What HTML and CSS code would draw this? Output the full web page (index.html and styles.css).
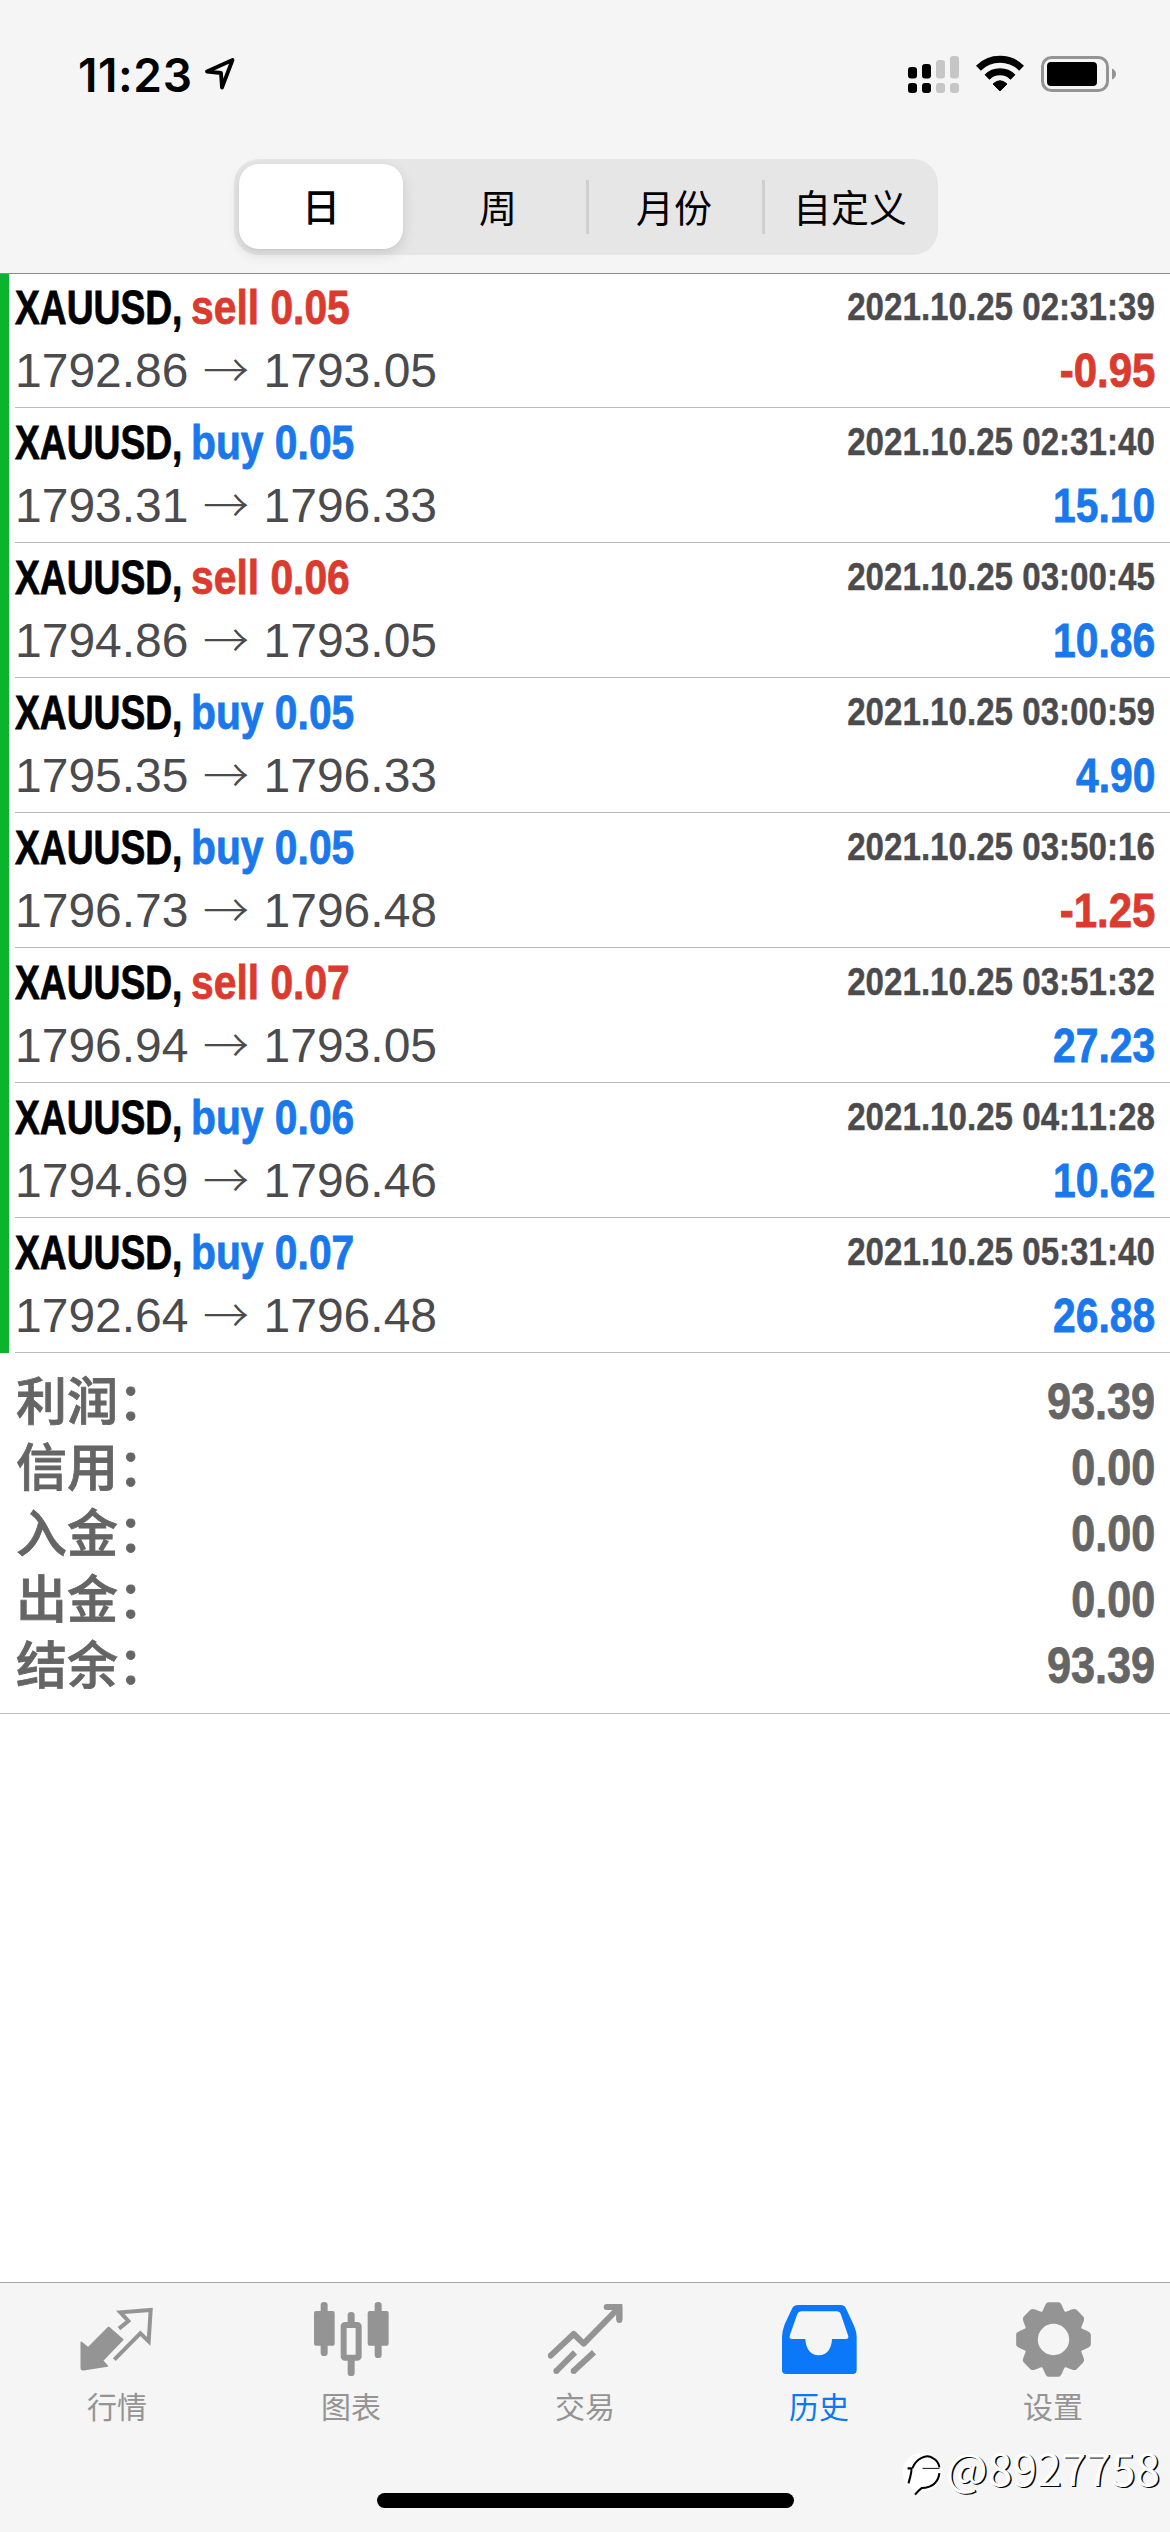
FILE: index.html
```html
<!DOCTYPE html>
<html lang="zh-CN">
<head>
<meta charset="utf-8">
<title>历史</title>
<link rel="stylesheet" href="styles.css">
</head>
<body>
<div class="screen">
  <header class="header">
    <div class="status">
      <div class="status-left">
        <span class="clock">11:23</span>
        <svg class="location" viewBox="0 0 32 34"><path d="M3 14.5 L28.5 3 L18 30.5 L17 16 Z" fill="none" stroke="#000" stroke-width="3.8" stroke-linejoin="round"/></svg>
      </div>
      <div class="status-right">
        <svg class="signal" viewBox="0 0 51 38">
          <g fill="#000"><rect x="0" y="11" width="9" height="11.5" rx="3"/><rect x="14" y="8" width="9" height="14.5" rx="3"/><rect x="0" y="27" width="9" height="10" rx="3"/><rect x="14" y="27" width="9" height="10" rx="3"/></g>
          <g fill="#c6c6c6"><rect x="28" y="4" width="9" height="18.5" rx="3"/><rect x="42" y="0" width="9" height="22.5" rx="3"/><rect x="28" y="27" width="9" height="10" rx="3"/><rect x="42" y="27" width="9" height="10" rx="3"/></g>
        </svg>
        <svg class="wifi" viewBox="0 0 48 37">
          <g fill="none" stroke="#000" stroke-width="7"><path d="M2.4 13.2 A30.5 30.5 0 0 1 45.6 13.2"/><path d="M11 22.2 A18.4 18.4 0 0 1 37 22.2"/></g>
          <path d="M24 36 L17 29 Q24 22.5 31 29 Z" fill="#000" stroke="#000" stroke-linejoin="round"/>
        </svg>
        <svg class="battery" viewBox="0 0 76 38"><rect x="1.5" y="1.5" width="65" height="33" rx="9" fill="none" stroke="#949494" stroke-width="3"/><rect x="6" y="6" width="50" height="24" rx="4" fill="#000"/><path d="M71 12.5 Q75 14.5 75 18 T71 23.5 Z" fill="#949494"/></svg>
      </div>
    </div>
    <nav class="segments">
      <span class="segment active">日</span><span class="segment">周</span><span class="segment divided">月份</span><span class="segment divided">自定义</span>
    </nav>
  </header>
  <main class="content">
    <div class="deal"><div class="body"><div class="line"><b class="symbol">XAUUSD,</b><b class="side neg">sell 0.05</b><b class="time">2021.10.25 02:31:39</b></div><div class="line price">1792.86<i class="arrow">→</i>1793.05<b class="profit neg">-0.95</b></div></div></div>
    <div class="deal"><div class="body"><div class="line"><b class="symbol">XAUUSD,</b><b class="side pos">buy 0.05</b><b class="time">2021.10.25 02:31:40</b></div><div class="line price">1793.31<i class="arrow">→</i>1796.33<b class="profit pos">15.10</b></div></div></div>
    <div class="deal"><div class="body"><div class="line"><b class="symbol">XAUUSD,</b><b class="side neg">sell 0.06</b><b class="time">2021.10.25 03:00:45</b></div><div class="line price">1794.86<i class="arrow">→</i>1793.05<b class="profit pos">10.86</b></div></div></div>
    <div class="deal"><div class="body"><div class="line"><b class="symbol">XAUUSD,</b><b class="side pos">buy 0.05</b><b class="time">2021.10.25 03:00:59</b></div><div class="line price">1795.35<i class="arrow">→</i>1796.33<b class="profit pos">4.90</b></div></div></div>
    <div class="deal"><div class="body"><div class="line"><b class="symbol">XAUUSD,</b><b class="side pos">buy 0.05</b><b class="time">2021.10.25 03:50:16</b></div><div class="line price">1796.73<i class="arrow">→</i>1796.48<b class="profit neg">-1.25</b></div></div></div>
    <div class="deal"><div class="body"><div class="line"><b class="symbol">XAUUSD,</b><b class="side neg">sell 0.07</b><b class="time">2021.10.25 03:51:32</b></div><div class="line price">1796.94<i class="arrow">→</i>1793.05<b class="profit pos">27.23</b></div></div></div>
    <div class="deal"><div class="body"><div class="line"><b class="symbol">XAUUSD,</b><b class="side pos">buy 0.06</b><b class="time">2021.10.25 04:11:28</b></div><div class="line price">1794.69<i class="arrow">→</i>1796.46<b class="profit pos">10.62</b></div></div></div>
    <div class="deal"><div class="body"><div class="line"><b class="symbol">XAUUSD,</b><b class="side pos">buy 0.07</b><b class="time">2021.10.25 05:31:40</b></div><div class="line price">1792.64<i class="arrow">→</i>1796.48<b class="profit pos">26.88</b></div></div></div>
    <section class="summary">
      <div class="total"><span class="label">利润：</span><b class="amount">93.39</b></div>
      <div class="total"><span class="label">信用：</span><b class="amount">0.00</b></div>
      <div class="total"><span class="label">入金：</span><b class="amount">0.00</b></div>
      <div class="total"><span class="label">出金：</span><b class="amount">0.00</b></div>
      <div class="total"><span class="label">结余：</span><b class="amount">93.39</b></div>
    </section>
  </main>
  <footer class="footer">
    <nav class="tabs">
      <div class="tab"><svg class="icon" viewBox="0 0 225 225"><path d="M4 121 L24 138 L86 76 L128 113 L67 176 L82 192 L11 203 Q4 204 4 198 Z" fill="currentColor" stroke="currentColor" stroke-width="5" stroke-linejoin="round"/><path d="M117 80 L145 57 L121 31 L212 24 L206 118 L181 94 L103 173" fill="none" stroke="currentColor" stroke-width="12"/></svg><span>行情</span></div>
      <div class="tab"><svg class="icon" viewBox="0 0 225 225" fill="currentColor"><rect x="0" y="27" width="62" height="104" rx="6"/><rect x="20" y="0" width="21" height="162" rx="10"/><rect x="161" y="27" width="63" height="104" rx="6"/><rect x="182" y="0" width="21" height="168" rx="10"/><rect x="101" y="30" width="21" height="40" rx="10"/><rect x="101" y="168" width="21" height="54" rx="10"/><rect x="89" y="69" width="45" height="98" rx="4" fill="none" stroke="currentColor" stroke-width="18"/></svg><span>图表</span></div>
      <div class="tab"><svg class="icon" viewBox="0 0 225 225" fill="none" stroke="currentColor" stroke-width="18" stroke-linejoin="round"><path d="M8 161 L77 96 L107 125 L210 20" stroke-linecap="round"/><path d="M176 15 L214 15 L214 54" stroke-linecap="round"/><path d="M205 6 H223 V54 H205 Z" fill="currentColor" stroke="none"/><circle cx="25" cy="207" r="9" fill="currentColor" stroke="none"/><circle cx="77" cy="207" r="9" fill="currentColor" stroke="none"/><path d="M25 207 L81 151 M77 207 L138 151"/></svg><span>交易</span></div>
      <div class="tab current"><svg class="icon" viewBox="0 0 225 225"><path fill="currentColor" fill-rule="evenodd" d="M48 9 H176 Q187 9 191 17 L214 67 Q224 89 224 105 V204 Q224 216 212 216 H12 Q0 216 0 204 V105 Q0 89 8 67 L30 20 Q35 9 48 9 Z M58 28 Q49 28 46 36 L24 98 Q20 111 30 111 H70 C71 138 84 160 110 160 C137 160 149 138 150 111 H192 Q202 111 198 100 L177 38 Q173 28 164 28 Z"/></svg><span>历史</span></div>
      <div class="tab"><svg class="icon" viewBox="-112.5 -112.5 225 225"><circle r="68" fill="none" stroke="currentColor" stroke-width="42"/><g fill="currentColor"><path id="teeth" d="M-40 -76 C-27 -88 -27 -112 -14 -112 H14 C27 -112 27 -88 40 -76 Z M-40 76 C-27 88 -27 112 -14 112 H14 C27 112 27 88 40 76 Z"/><use href="#teeth" transform="rotate(45)"/><use href="#teeth" transform="rotate(90)"/><use href="#teeth" transform="rotate(135)"/></g></svg><span>设置</span></div>
    </nav>
    <div class="home-bar"></div>
    <div class="watermark"><svg class="mark" viewBox="0 0 48 48"><circle cx="23" cy="22" r="21" fill="#fff"/><path d="M7 18 H11 M12 18 C16 8 27 2 34 7 Q40 10 41 17 M11 18 Q12 20 8 34" fill="none" stroke="#000" stroke-width="2.2"/><path d="M23 18 H41" stroke="#000" stroke-width="1"/><path d="M41 23 Q39 38 22 39 Q18 42 15 46" fill="none" stroke="#000" stroke-width="2.2"/></svg><span class="handle">@8927758</span></div>
  </footer>
</div>
</body>
</html>
```
FILE: styles.css
```css
* { box-sizing: border-box; }
body { margin: 0; background: #fff; }
svg { display: block; flex: none; }

.screen {
  width: 1170px;
  height: 2532px;
  display: flex;
  flex-direction: column;
  overflow: hidden;
  font-family: "Liberation Sans", "Noto Sans CJK SC", sans-serif;
  font-kerning: none;
  color: #4b4b4e;
}

/* status bar and period switch */
.header { height: 274px; flex: none; background: #f5f5f5; border-bottom: 1px solid #8a8a8a; }
.status { height: 159px; padding: 0 54px 0 78px; display: flex; justify-content: space-between; }
.status-left { display: flex; }
.clock { width: 126px; margin-top: 47px; font: 600 46px/56px Inter, sans-serif; font-kerning: auto; letter-spacing: .6px; color: #000; }
.location { width: 32px; height: 34px; margin-top: 57px; }
.status-right { display: flex; padding-top: 56px; }
.signal { width: 51px; height: 38px; margin-right: 17px; }
.wifi { width: 48px; height: 37px; margin: -1px 17px 0 0; }
.battery { width: 76px; height: 38px; margin-right: -1px; }

.segments {
  width: 704px; height: 96px; margin-left: 234px;
  display: grid; grid-template-columns: repeat(4, 1fr);
  background: #e6e6e7; border-radius: 25px;
}
.segment {
  display: flex; align-items: center; justify-content: center;
  padding-bottom: 3px;
  font: 400 38px/1 "Noto Sans CJK SC", sans-serif; color: #000;
}
.segment.divided { background: linear-gradient(#cfcfd1, #cfcfd1) 0 50% / 3px 54px no-repeat; }
.segment.active {
  margin: 5px 7px 6px 5px; font-weight: 500; background: #fff; border-radius: 20px;
  box-shadow: 0 5px 14px rgba(0, 0, 0, .12), 0 1px 2px rgba(0, 0, 0, .04);
}

/* closed deals */
.content { flex: 1; }
.deal { height: 135px; border-left: 9px solid #0ab42d; border-image: linear-gradient(#0ab42d 134px, #fff 134px) 1; border-width: 0 0 0 9px; padding-left: 6px; }
.deal:first-child { height: 134px; }
.deal:first-child .body { height: 134px; padding-top: 2px; }
.body { height: 135px; border-bottom: 1px solid #b9b9bb; padding: 3px 15px 0 0; }
.line { height: 63px; display: flex; font-size: 48px; line-height: 63px; white-space: nowrap; }
.symbol, .side, .time, .profit, .amount { -webkit-text-stroke: .8px currentColor; }
.symbol { width: 176px; color: #000; transform: scaleX(.775); transform-origin: 0 50%; }
.side { transform: scaleX(.85); transform-origin: 0 50%; }
.time { margin-left: auto; font-size: 38px; transform: scaleX(.872); transform-origin: 100% 50%; -webkit-text-stroke-width: .4px; }
.profit { margin-left: auto; transform: scaleX(.85); transform-origin: 100% 50%; }
.profit.neg { transform: scaleX(.875); }
.arrow { width: 75px; font: normal 300 46px/56px "Noto Sans CJK SC", sans-serif; text-align: center; }
.neg { color: #db3b2f; }
.pos { color: #1878ec; }

/* totals */
.summary { height: 361px; padding: 16px 15px 0 16px; border-bottom: 1px solid #c0c0c0; color: #656565; }
.total { height: 66px; display: flex; justify-content: space-between; }
.label { font: 500 51px/58px "Noto Sans CJK SC", sans-serif; -webkit-text-stroke: .8px currentColor; }
.amount { font-size: 50px; line-height: 66px; transform: scaleX(.865); transform-origin: 100% 50%; }

/* tab bar */
.footer { position: relative; height: 250px; flex: none; background: #f5f5f5; border-top: 1px solid #a6a6a8; }
.tabs { display: grid; grid-template-columns: repeat(5, 234px); height: 210px; }
.tab { display: flex; flex-direction: column; align-items: center; padding-top: 19px; color: #949494; font: 400 30px/44px "Noto Sans CJK SC", sans-serif; }
.tab.current { color: #0a78f8; }
.icon { width: 75px; height: 75px; margin-bottom: 6px; }
.home-bar { width: 417px; height: 15px; margin: 0 0 0 377px; border-radius: 8px; background: #000; }
.watermark {
  position: absolute; left: 901px; top: 167px; display: flex;
  font: 400 44px/60px "Noto Sans CJK SC", sans-serif; color: #fff;
  text-shadow: 1.5px .8px 0 #000;
}
.mark { width: 45px; height: 48px; }
.handle { margin-top: -13px; letter-spacing: .2px; }
```
